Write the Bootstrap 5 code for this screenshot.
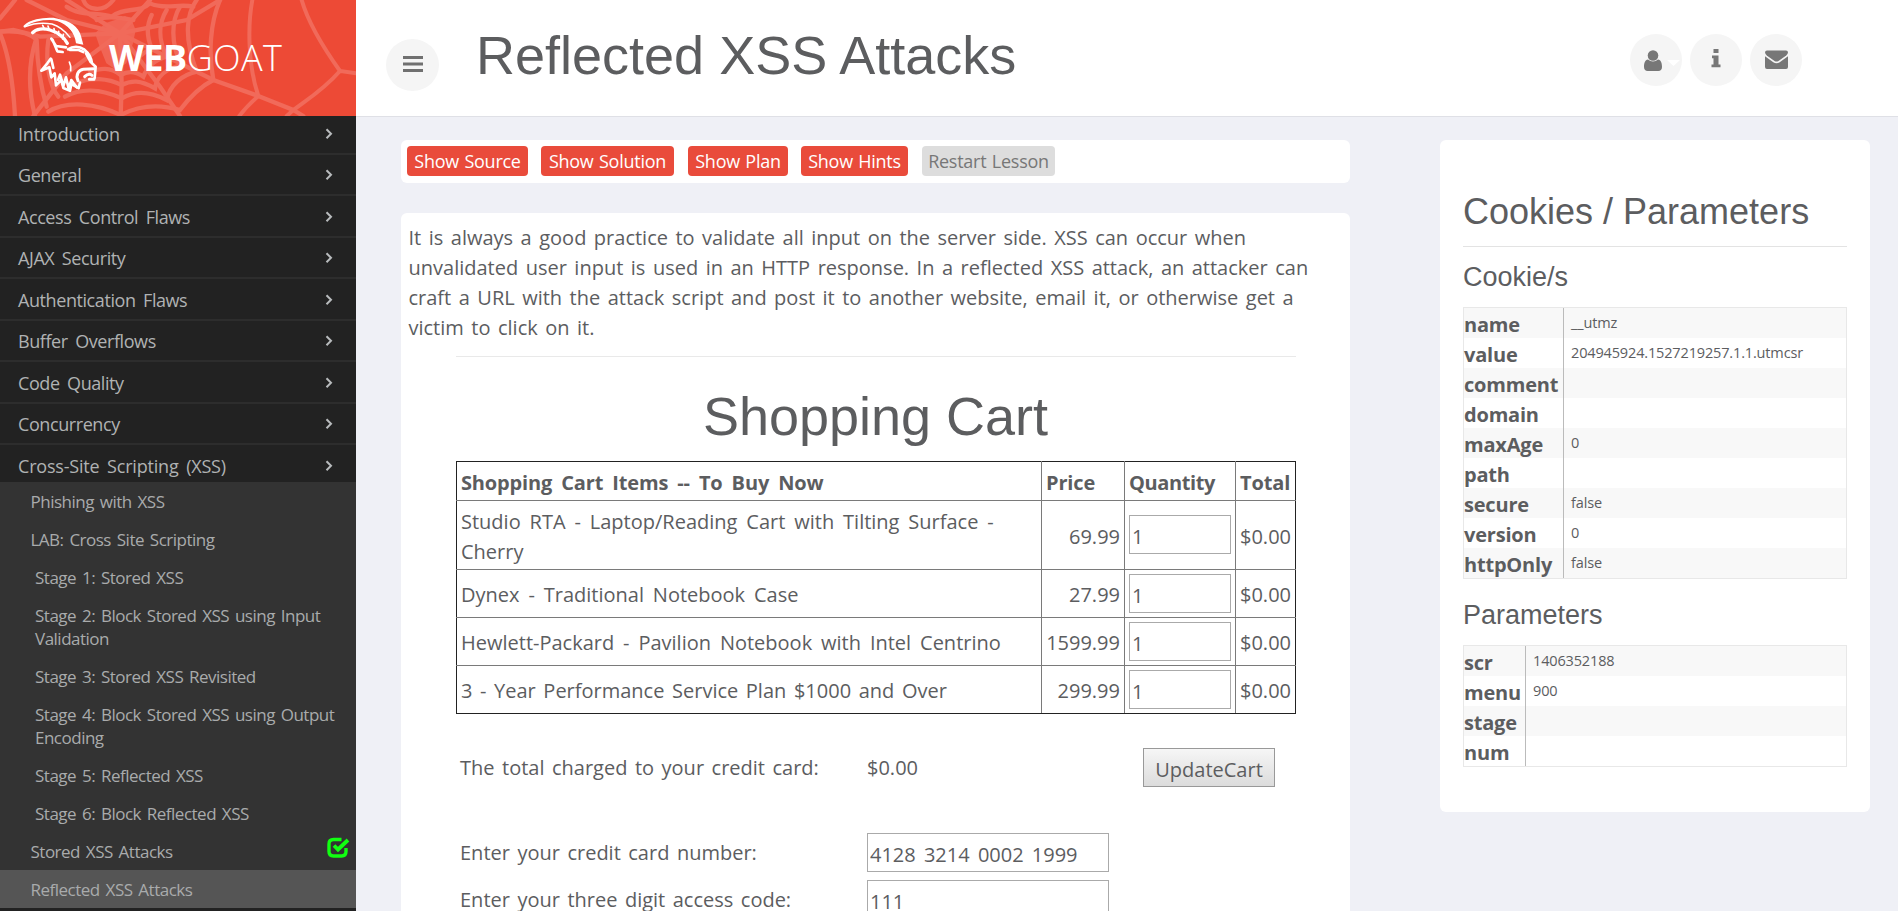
<!DOCTYPE html>
<html lang="en">
<head>
<meta charset="utf-8">
<title>WebGoat - Reflected XSS Attacks</title>
<link href="https://cdn.jsdelivr.net/npm/bootstrap@5.3.0/dist/css/bootstrap.min.css" rel="stylesheet">
<style>
  :root { --ui: "Open Sans", "Noto Sans", sans-serif; --head: "Liberation Sans", Arial, sans-serif; }
  body { font: 20px/30px var(--ui); color: #5c5d5f; background: #eff0f6; height: 911px; overflow: hidden; word-spacing: 2.3px; font-variant-ligatures: none; }
  h1, h2, h3 { font-family: var(--head); font-weight: 400; line-height: 1; margin: 0; word-spacing: 0; color: #5c5d5f; white-space: nowrap; }
  h1 { font-size: 54px; } h2 { font-size: 36px; } h3 { font-size: 27px; }
  .page-wrap { height: 911px; }

  .side { width: 356px; background: #222; color: #b3b5b6; }
  .brand { height: 116px; background: #ed4a36; }
  .brand svg { position: absolute; inset: 0; }
  .brand-name { position: relative; padding: 34px 0 0 109px; font-size: 36px; line-height: 48px; color: #fff; word-spacing: 0; }
  .brand-name strong { letter-spacing: -.5px; }
  .brand-name span { font-weight: 300; letter-spacing: .4px; }
  .menu-main > a, .menu-sub > a { display: block; color: #b0b2b3; text-decoration: none; }
  .menu-main > a { display: flex; justify-content: space-between; height: 41.5px; padding: 7.5px 20px 0 18px; font-size: 18px; line-height: 26px; letter-spacing: -.42px; word-spacing: 3.2px; border-bottom: 2px solid #2d2d2d; }
  .menu-main > a:first-child { height: 38.5px; padding-top: 5px; letter-spacing: -.2px; }
  .menu-main > a:last-child { height: 37px; border: 0; letter-spacing: -.2px; }
  .menu-main svg { margin-top: 6px; }
  .menu-sub { background: #333; }
  .menu-sub > a { padding: 8px 14px 7px 30.5px; font-size: 17px; line-height: 23px; letter-spacing: -.5px; word-spacing: 1.9px; color: #a9abac; }
  .menu-sub > .stage { padding-left: 35px; }
  .menu-sub > .active { background: #555; }
  .done-mark { position: absolute; right: 6px; top: 5px; }

  .topbar { height: 117px; background: #fff; border-bottom: 1px solid #dfe0e6; }
  .round { width: 52px; height: 52px; background: #f5f5f5; border-radius: 50%; flex: none; }
  .toggle { margin: 39px 0 0 30px; width: 53px; }
  .topbar h1 { margin: 28px 0 0 37px; }
  .tools { margin: 34px 96px 0 auto; gap: 8px; }

  .main-col { margin-left: 45px; width: 949px; }
  .panel { background: #fff; border-radius: 6px; }
  .actions { height: 43px; padding: 6px; margin-top: 23px; }
  .actions .btn { height: 30px; padding: 0; font-size: 18px; line-height: 30px; letter-spacing: -.25px; word-spacing: 1px; border: 0; border-radius: 4px; color: #fff; background: #e94b3b; }
  .actions .btn.restart { background: #ddd; color: #777; }
  .lesson { margin-top: 30px; padding: 10px 7px 0; height: 720px; }
  .lesson p { margin: 0; width: 912px; padding-left: .5px; }
  .cart { margin: 13px 0 0 48px; width: 840px; border-top: 1px solid #e9e9e9; }
  .cart h1 { margin: 32px 0 18px; text-align: center; padding-right: 1px; }
  .cart-table { width: 840px; table-layout: fixed; border-collapse: collapse; border: 1px solid #222; }
  .cart-table th, .cart-table td { border: 1px solid #7a7a7a; padding: 3px 4px 0; }
  .cart-table tr:first-child > * { border-top-color: #222; }
  .cart-table tr:last-child > * { border-bottom-color: #222; }
  .cart-table tr > :first-child { border-left-color: #222; }
  .cart-table tr > :last-child { border-right-color: #222; }
  .cart-table th { letter-spacing: -.15px; word-spacing: 4px; }
  .cart-table th:nth-child(3) { letter-spacing: -.4px; }
  .cart-table td:first-child { word-spacing: 3.7px; }
  .cart-table tr:last-child td:first-child { word-spacing: 2.4px; }
  .field { border: 1px solid #aaa; height: 39px; padding: 3px 1px 0 2px; color: #5c5d5f; background: #fff; border-radius: 0; font: inherit; word-spacing: 3px; outline: 0; display: block; }
  .qty { width: 102px; margin-top: -4px; padding-top: 4px; }
  .pay { padding-left: 4px; }
  .pay > div { display: grid; grid-template-columns: 407px 276px auto; justify-content: start; align-items: center; height: 39px; }
  .pay span { padding-top: 1px; }
  .update { height: 39px; width: 132px; padding: 4px 0 0; font: inherit; color: #5c5d5f; background: linear-gradient(#f6f6f6, #dcdcdc); border: 1px solid #999; border-radius: 0; }

  .info-panel { width: 430px; height: 672px; margin: 23px 0 0 90px; padding: 54px 23px 0; }
  .info-panel h2 { height: 53px; border-bottom: 1px solid #e3e3e3; }
  .kv { border: 1px solid #e8e8e8; width: 384px; border-collapse: separate; border-spacing: 0; table-layout: fixed; }
  .kv tr { height: 30px; }
  .kv tr:nth-child(odd) { background: #f8f8f8; }
  .kv th { font-size: 20px; line-height: 27px; padding: 3px 0 0; letter-spacing: -.2px; border-right: 1px solid #bbb; }
  .kv td { font-size: 14.5px; line-height: 29px; padding: 0 0 1px 7px; letter-spacing: -.15px; }
</style>
</head>
<body>
<div class="page-wrap d-flex">
  <aside class="side flex-shrink-0 overflow-hidden">
    <div class="brand position-relative overflow-hidden">
      <svg width="356" height="116" viewBox="0 0 1068 348" fill="none">
        <g stroke="#f16a5a" stroke-width="13" stroke-linecap="round">
          <!-- radial threads -->
          <path d="M360 100 640 240 775 288 880 330 910 348M360 100 560 60 660 0M360 100 450 0M360 100 200 0M360 100 200 60 80 0M360 100 120 110 40 90 0 95M360 100 200 220 100 348M360 100 365 250 362 348M360 100 480 260 540 348"/>
          <!-- rings of the web -->
          <path d="M905 0C925 70 975 150 1020 213L1068 220M1020 213C970 270 920 300 880 330L860 348M757 0C742 80 745 200 775 288 750 310 735 325 718 348" stroke-width="12"/>
          <path d="M660 0C630 70 625 160 640 240 600 260 570 290 540 330 470 310 410 320 362 345 290 310 200 300 145 335M0 55C20 30 30 20 45 0M0 95C60 90 90 100 108 118 85 190 85 270 105 348M0 100C30 170 40 260 45 348"/>
          <path d="M590 0C560 40 550 110 590 215 545 225 510 255 500 300 440 270 400 275 365 295 300 265 240 265 195 290M540 20C515 60 510 130 545 195 500 205 470 230 465 265 420 240 395 240 365 255 325 235 270 230 230 250"/>
          <path d="M500 30C475 70 475 120 500 170 460 180 440 205 430 230 400 210 380 215 362 225 330 200 300 205 270 215M455 45C440 75 440 110 455 145 425 160 410 175 400 195M250 0C260 30 310 40 340 0M290 60C310 50 350 50 400 60"/>
          <path d="M200 20C240 50 300 35 335 50 370 20 420 40 450 10 490 30 540 10 580 20M145 120C135 190 150 260 175 290M110 120C112 200 125 270 140 320"/>
        </g>
        <path d="M285 100l30-30 30-10 30-12 20 12 12 30-8 40-20 60-30 20-30-20-20-50z" fill="#f16a5a" opacity=".85"/>
        <!-- goat head -->
        <g stroke="#fff" stroke-linecap="round" stroke-linejoin="round">
          <path d="M74 79C90 63 125 55 160 57 195 62 222 88 234 120" stroke-width="7"/>
          <path d="M98 98C108 86 130 84 150 90 176 98 192 112 202 130" stroke-width="10"/>
          <path d="M76 80C100 70 130 68 156 72 176 78 196 94 210 112" stroke-width="4"/>
          <path d="M128 76l6 12M144 78l4 12M162 86l2 12M176 94v12M190 103l-2 14" stroke-width="5"/>
          <path d="M204 148C218 138 238 138 252 148 264 158 274 172 276 190L287 200 284 234" stroke-width="8"/>
          <path d="M210 150 236 150 250 156M258 160l14 26" stroke-width="8"/>
          <path d="M208 186l4 12v14" stroke-width="5"/>
          <path d="M234 242C226 224 236 210 250 208L282 206M254 230q12-12 22-4M268 238l14 0" stroke-width="9"/>
          <path d="M154 116 168 138 198 142M158 120 172 154 188 156" stroke-width="8"/>
          <path d="M152 176 142 190 124 212 148 202 154 232 164 220 168 256 184 240 190 264 210 272 214 252 236 264 240 248" stroke-width="8"/>
          <path d="M154 178 160 204M174 240l6-16 10 34 8-26 8 34 8-26 16 22" stroke-width="8"/>
        </g>
        <path d="M170 57C210 60 236 82 243 108L250 134 228 130C224 100 206 72 170 57z" fill="#fff"/>
      </svg>
      <div class="brand-name"><strong>WEB</strong><span>GOAT</span></div>
    </div>
    <nav class="menu-main" id="menu"></nav>
    <nav class="menu-sub">
      <a href="#">Phishing with XSS</a>
      <a href="#">LAB: Cross Site Scripting</a>
      <a href="#" class="stage">Stage 1: Stored XSS</a>
      <a href="#" class="stage">Stage 2: Block Stored XSS using Input Validation</a>
      <a href="#" class="stage">Stage 3: Stored XSS Revisited</a>
      <a href="#" class="stage">Stage 4: Block Stored XSS using Output Encoding</a>
      <a href="#" class="stage">Stage 5: Reflected XSS</a>
      <a href="#" class="stage">Stage 6: Block Reflected XSS</a>
      <a href="#" class="position-relative">Stored XSS Attacks
        <svg class="done-mark" width="24" height="22" viewBox="0 0 24 22" fill="none" stroke="#1f1"><path d="M15.5 2.5H7.5Q3 2.5 3 7v7.500Q3 19 7.500 19h8Q20 19 20 14.500V11" stroke-width="3.4"/><path d="M8 8.500l4 4L22 3" stroke-width="3.800"/></svg>
      </a>
      <a href="#" class="active">Reflected XSS Attacks</a>
    </nav>
  </aside>

  <div class="flex-grow-1">
    <header class="topbar d-flex">
      <div class="round toggle d-flex align-items-center justify-content-center">
        <svg width="20" height="18" viewBox="0 0 20 18" fill="#707070"><path d="M0 0h20v3H0zM0 6.500h20v3H0zM0 13h20v3H0z"/></svg>
      </div>
      <h1>Reflected XSS Attacks</h1>
      <div class="tools d-flex">
        <div class="round"><svg width="52" height="52" viewBox="0 0 52 52"><path d="M37 26h13l-6.500 6z" fill="#fff"/><g fill="#777"><circle cx="23" cy="21.500" r="5.300"/><path d="M18 25.500c1.500 1.300 3 2 5 2s3.500-.7 5-2c3 .5 4 3.500 4 7.500 0 2.500-1.500 4-3.700 4H17.700C15.500 37 14 35.500 14 33c0-4 1-7 4-7.500z"/></g></svg></div>
        <div class="round"><svg width="52" height="52" viewBox="0 0 52 52" fill="#777"><path d="M23.500 15h5v4h-5zM22 21.500h6.500V30.500H30.500V33.300H21.500V30.500H23.500V24.300H22z"/></svg></div>
        <div class="round"><svg width="52" height="52" viewBox="0 0 52 52" fill="#777"><path d="M17 16.500h19q2 0 2 2-.2 1.700-1.800 3l-7.700 5.400q-2 1.400-4 0l-7.700-5.400Q15.200 20.200 15 18.500q0-2 2-2z"/><path d="M15 22.200l8.300 6q3.200 2.200 6.400 0l8.300-6V33q0 2-2 2H17q-2 0-2-2z"/></svg></div>
      </div>
    </header>

    <div class="d-flex">
      <main class="main-col">
        <div class="panel actions d-flex">
          <button class="btn" style="width:121px">Show Source</button>
          <button class="btn" style="width:133px;margin-left:13px">Show Solution</button>
          <button class="btn" style="width:100px;margin-left:14px">Show Plan</button>
          <button class="btn" style="width:107px;margin-left:13px">Show Hints</button>
          <button class="btn restart" style="width:133px;margin-left:14px">Restart Lesson</button>
        </div>
        <section class="panel lesson">
          <p>It is always a good practice to validate all input on the server side. XSS can occur when<br>unvalidated user input is used in an HTTP response. In a reflected XSS attack, an attacker can<br>craft a URL with the attack script and post it to another website, email it, or otherwise get a<br>victim to click on it.</p>
          <div class="cart">
            <h1>Shopping Cart</h1>
            <table class="cart-table">
              <colgroup><col style="width:585px"><col style="width:83px"><col style="width:111px"><col style="width:60px"></colgroup>
              <tbody>
                <tr style="height:39px"><th>Shopping Cart Items -- To Buy Now</th><th>Price</th><th>Quantity</th><th>Total</th></tr>
                <tr style="height:69px"><td>Studio RTA - Laptop/Reading Cart with Tilting Surface -<br>Cherry</td><td class="text-end">69.99</td><td><input class="field qty" value="1"></td><td>$0.00</td></tr>
                <tr style="height:48px"><td>Dynex - Traditional Notebook Case</td><td class="text-end">27.99</td><td><input class="field qty" value="1"></td><td>$0.00</td></tr>
                <tr style="height:48px"><td>Hewlett-Packard - Pavilion Notebook with Intel Centrino</td><td class="text-end">1599.99</td><td><input class="field qty" value="1"></td><td>$0.00</td></tr>
                <tr style="height:48px"><td>3 - Year Performance Service Plan $1000 and Over</td><td class="text-end">299.99</td><td><input class="field qty" value="1"></td><td>$0.00</td></tr>
              </tbody>
            </table>
            <div class="pay">
              <div style="margin-top:34px"><span>The total charged to your credit card:</span><span>$0.00</span><button class="update">UpdateCart</button></div>
              <div style="margin-top:46px"><span>Enter your credit card number:</span><input class="field" style="width:242px" value="4128 3214 0002 1999"></div>
              <div style="margin-top:8px"><span>Enter your three digit access code:</span><input class="field" style="width:242px" value="111"></div>
            </div>
          </div>
        </section>
      </main>

      <aside class="panel info-panel">
        <h2>Cookies / Parameters</h2>
        <h3 style="margin:17px 0 16px">Cookie/s</h3>
        <table class="kv">
          <colgroup><col style="width:100px"><col></colgroup>
          <tbody>
            <tr><th>name</th><td>__utmz</td></tr>
            <tr><th>value</th><td>204945924.1527219257.1.1.utmcsr</td></tr>
            <tr><th>comment</th><td></td></tr>
            <tr><th>domain</th><td></td></tr>
            <tr><th>maxAge</th><td>0</td></tr>
            <tr><th>path</th><td></td></tr>
            <tr><th>secure</th><td>false</td></tr>
            <tr><th>version</th><td>0</td></tr>
            <tr><th>httpOnly</th><td>false</td></tr>
          </tbody>
        </table>
        <h3 style="margin:23px 0 16px">Parameters</h3>
        <table class="kv">
          <colgroup><col style="width:62px"><col></colgroup>
          <tbody>
            <tr><th>scr</th><td>1406352188</td></tr>
            <tr><th>menu</th><td>900</td></tr>
            <tr><th>stage</th><td></td></tr>
            <tr><th>num</th><td></td></tr>
          </tbody>
        </table>
      </aside>
    </div>
  </div>
</div>
<script src="https://cdn.jsdelivr.net/npm/bootstrap@5.3.0/dist/js/bootstrap.bundle.min.js"></script>
<script>
  // Lesson categories in the side menu
  const categories = ['Introduction', 'General', 'Access Control Flaws', 'AJAX Security', 'Authentication Flaws', 'Buffer Overflows', 'Code Quality', 'Concurrency', 'Cross-Site Scripting (XSS)'];
  document.getElementById('menu').innerHTML = categories.map(name =>
    `<a href="#">${name}<svg width="14" height="14" viewBox="0 0 14 14" fill="none" stroke="#b8bbbd" stroke-width="2"><path d="M4.500 2.200 9 6.700 4.500 11.200"/></svg></a>`).join('');
</script>
</body>
</html>
